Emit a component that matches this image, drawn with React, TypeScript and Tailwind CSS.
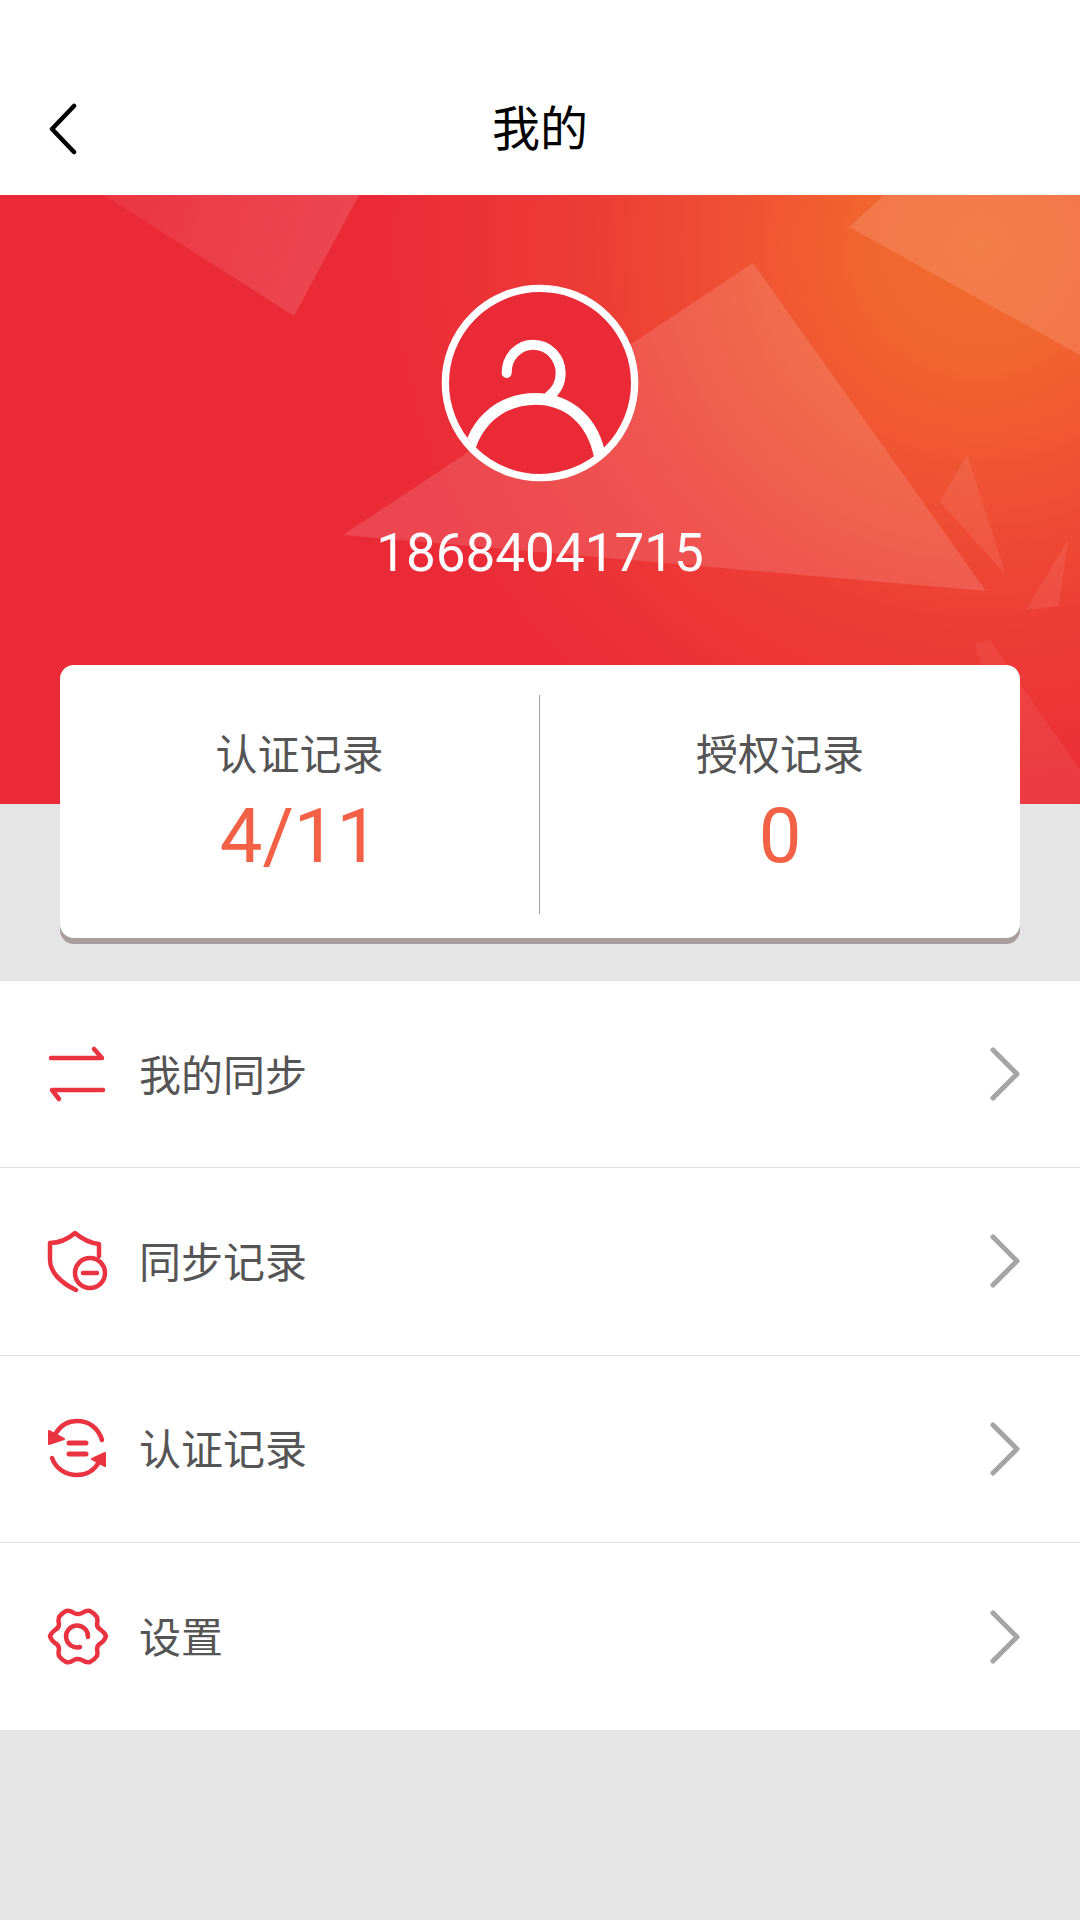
import React from 'react';

const FONT = "font-['Roboto','Noto_Sans_CJK_SC',sans-serif]";

const SyncIcon = () => (
  <svg width="100" height="100" viewBox="0 -6 100 100" fill="none" stroke="#ea3340" strokeWidth="4.5" strokeLinecap="round" strokeLinejoin="round">
    <path d="M21 28H72L64 19" />
    <path d="M73 60H22L29 69" />
  </svg>
);

const ShieldIcon = () => (
  <svg width="100" height="100" viewBox="0 1 100 100" fill="none" stroke="#ea3340" strokeWidth="4.5" strokeLinecap="round" strokeLinejoin="round">
    <path d="M69 46V34C60 33 52 29 45 23C38 29 30 33 20 33V50C20 62 31 73 46 80" />
    <circle cx="60" cy="63" r="15" />
    <path d="M53 63H67" />
  </svg>
);

const RecordIcon = () => (
  <svg width="100" height="100" viewBox="0 -1 100 100" fill="none" stroke="#ea3340" strokeWidth="4.5" strokeLinecap="round">
    <path d="M72 40C68 27 58 21 47 21C38 21 31 25 26 33" />
    <path d="M22 58C26 69 36 75 47 75C56 75 64 71 69 62" />
    <path d="M19 31L19 44L34 39Z" fill="#ea3340" stroke="#ea3340" strokeWidth="2" strokeLinejoin="round" />
    <path d="M75 53L75 66L62 59Z" fill="#ea3340" stroke="#ea3340" strokeWidth="2" strokeLinejoin="round" />
    <path d="M39 43H56M39 54H56" strokeWidth="5" />
  </svg>
);

const GearIcon = () => (
  <svg width="100" height="100" viewBox="0 -3 100 100" fill="none" stroke="#ea3340" strokeWidth="4.5" strokeLinecap="round" strokeLinejoin="round">
    <path d="M36 21Q40 20 44 23Q47 25 52 23Q56 20 60 21Q64 23 67 27Q68 31 67 34Q67 38 71 40Q75 43 76 46Q75 50 71 53Q67 55 67 59Q68 63 67 66Q64 70 60 72Q56 73 52 70Q47 68 44 70Q40 73 36 72Q32 70 29 66Q28 63 29 59Q29 55 25 53Q21 50 20 46Q21 43 25 40Q29 38 29 34Q28 31 29 27Q32 23 36 21Z" />
    <path d="M58 47A11 11 0 1 0 50 57" />
  </svg>
);

const rows = [
  { label: '我的同步', icon: <SyncIcon /> },
  { label: '同步记录', icon: <ShieldIcon /> },
  { label: '认证记录', icon: <RecordIcon /> },
  { label: '设置', icon: <GearIcon /> },
];

const BannerArt = () => (
  <svg className="absolute inset-0" width="1080" height="609" viewBox="0 195 1080 609">
    <defs>
      <radialGradient id="bg" cx="980" cy="245" r="600" gradientUnits="userSpaceOnUse">
        <stop offset="0" stopColor="#f26c30" />
        <stop offset="0.2" stopColor="#f1642f" />
        <stop offset="0.42" stopColor="#ef5033" />
        <stop offset="0.65" stopColor="#ed3c36" />
        <stop offset="1" stopColor="#ea2b37" />
      </radialGradient>
      <linearGradient id="tri1" x1="130" y1="195" x2="340" y2="260" gradientUnits="userSpaceOnUse">
        <stop offset="0" stopColor="#fff" stopOpacity="0.06" />
        <stop offset="1" stopColor="#fff" stopOpacity="0.13" />
      </linearGradient>
    </defs>
    <rect x="0" y="195" width="1080" height="609" fill="url(#bg)" />
    <path d="M104 195H359L294 316Z" fill="url(#tri1)" />
    <path d="M753 263L986 591L343 535Z" fill="#fff" fillOpacity="0.13" />
    <path d="M884 195H1080V355L849 227Z" fill="#fff" fillOpacity="0.13" />
    <path d="M967 455L1006 575L940 502Z" fill="#fff" fillOpacity="0.08" />
    <path d="M1068 540L1059 606L1026 610Z" fill="#fff" fillOpacity="0.08" />
    <path d="M975 643L990 640L1080 770V804H1020Z" fill="#fff" fillOpacity="0.06" />
  </svg>
);

export default function App() {
  return (
    <div className={`w-[1080px] min-h-[1920px] bg-[#e5e5e5] ${FONT}`}>
      <header className="h-[195px] bg-white pt-[65px] grid grid-cols-[1fr_auto_1fr] items-center">
        <svg className="ml-[48px] -mt-[2px]" width="30" height="52" viewBox="0 0 30 52" fill="none" stroke="#000" strokeWidth="4.5" strokeLinecap="round" strokeLinejoin="round">
          <path d="M26 3L4 26L26 49" />
        </svg>
        <h1 className="text-[48px] leading-none font-normal text-black">我的</h1>
        <div />
      </header>

      <section className="relative h-[609px] flex flex-col items-center pt-[88px]">
        <BannerArt />
        <svg className="relative" width="200" height="200" viewBox="58 40 600 600" fill="none" stroke="#fff" strokeLinecap="round">
          <circle cx="358" cy="340" r="284" fill="#ea2a36" strokeWidth="22" />
          <path d="M258 310C258 260 295 225 338 225C385 225 420 265 420 310C420 340 405 365 385 380" strokeWidth="30" />
          <path d="M140 505C175 420 255 370 345 370C440 370 525 430 552 540L520 562C500 460 430 405 345 405C265 405 195 450 165 535Z" fill="#fff" stroke="none" />
        </svg>
        <div className="relative mt-[39px] text-[53px] leading-[62px] text-white">18684041715</div>
      </section>

      <div className="relative mx-[60px] -mt-[139px] h-[273px] bg-white rounded-[14px] shadow-[0_6px_0_#a89f9d] flex items-start">
        <div className="w-[479px] flex flex-col items-center pt-[66px]">
          <div className="text-[42px] leading-[50px] text-[#555]">认证记录</div>
          <div className="mt-[13px] text-[76px] leading-[84px] text-[#f26045]">4/11</div>
        </div>
        <div className="w-px h-[219px] mt-[30px] bg-[#a0a0a0]" />
        <div className="flex-1 flex flex-col items-center pt-[66px]">
          <div className="text-[42px] leading-[50px] text-[#555]">授权记录</div>
          <div className="mt-[13px] text-[76px] leading-[84px] text-[#f26045]">0</div>
        </div>
      </div>

      <ul className="mt-[43px] bg-white">
        {rows.map((r, i) => (
          <li key={r.label} className={`h-[187.33px] pl-[30px] pr-[58px] flex items-center ${i < rows.length - 1 ? 'border-b border-[#e0e0e0]' : ''}`}>
            {r.icon}
            <span className="ml-[9px] pt-[4px] flex-1 text-[42px] text-[#555]">{r.label}</span>
            <svg width="32" height="56" viewBox="0 0 32 56" fill="none" stroke="#a5a5a5" strokeWidth="5" strokeLinecap="round" strokeLinejoin="round">
              <path d="M3 4L27 28L3 52" />
            </svg>
          </li>
        ))}
      </ul>
    </div>
  );
}
